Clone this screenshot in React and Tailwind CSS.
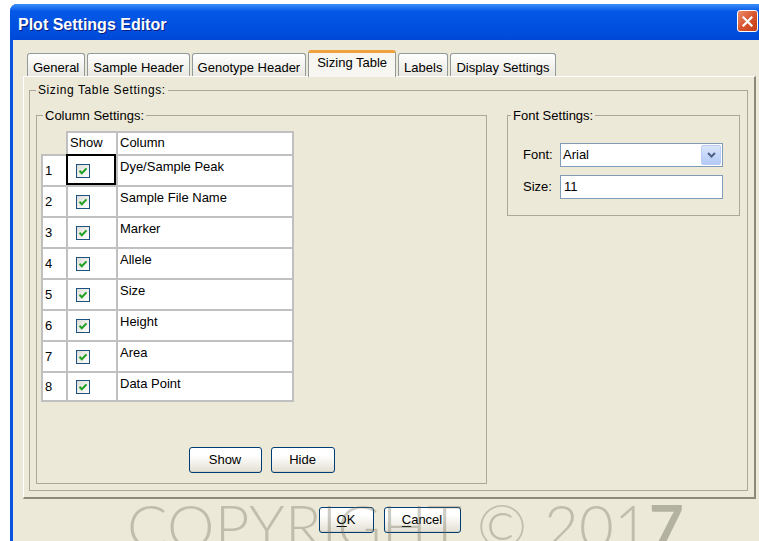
import { useState } from "react";

const tabs = ["General", "Sample Header", "Genotype Header", "Sizing Table", "Labels", "Display Settings"];

const columns = [
  "Dye/Sample Peak",
  "Sample File Name",
  "Marker",
  "Allele",
  "Size",
  "Height",
  "Area",
  "Data Point",
];

const XpCheck = ({ checked }) => (
  <span className="flex items-center justify-center w-[14px] h-[14px] border border-[#1c5180] bg-linear-to-br from-[#dcdcd7] to-white">
    {checked && (
      <svg width="10" height="10" viewBox="0 0 10 10">
        <path d="M1.5 4.8 L3.8 7.2 L8.5 2.4" fill="none" stroke="#21a121" strokeWidth="2" />
      </svg>
    )}
  </span>
);

const XpButton = ({ children, className = "" }) => (
  <button
    className={
      "h-[26px] rounded-[3px] border border-[#003c74] bg-linear-to-b from-white from-30% to-[#e3e0d3] text-[13px] text-black shadow-[inset_0_-1px_0_#d6d0c5] " +
      className
    }
  >
    {children}
  </button>
);

// legend offset is counted from the fieldset's padding edge, so group boxes keep
// their horizontal padding on the inner content instead
const GroupBox = ({ label, legendClass = "ml-[6px]", className = "", children }) => (
  <fieldset className={"border border-[#aca899] min-w-0 " + className}>
    <legend className={"px-[2px] text-[13px] leading-[15px] text-black " + legendClass}>{label}</legend>
    {children}
  </fieldset>
);

export default function App() {
  const [active, setActive] = useState("Sizing Table");
  const [shown, setShown] = useState(columns.map(() => true));

  const cell = "border-l-2 border-t-2 border-[#c0c0c0] bg-white";

  return (
    <div className="relative w-[759px] h-[541px] overflow-hidden bg-white font-['Liberation_Sans',Arial,sans-serif]">
      <div className="ml-[10px] mt-[4px] w-[754px] h-[560px] rounded-t-[7px] bg-[#0a53e0] flex flex-col">
        {/* title bar */}
        <div className="h-[36px] flex justify-between pl-[8px] pr-[6px] rounded-t-[7px] bg-linear-to-b from-[#3c8ff7] from-0% via-[#0458e8] via-20% to-[#0049d8] to-100%">
          <span className="pt-[12px] text-white font-bold text-[16px] leading-[18px] [text-shadow:1px_1px_0_#0a1e80]">
            Plot Settings Editor
          </span>
          <button className="mt-[6px] w-[21px] h-[22px] rounded-[3px] border border-white bg-linear-to-br from-[#ec8d6c] via-[#d8552f] to-[#c13d16] flex items-center justify-center">
            <svg width="11" height="11" viewBox="0 0 11 11">
              <path d="M1.5 1.5 L9.5 9.5 M9.5 1.5 L1.5 9.5" stroke="white" strokeWidth="2.2" strokeLinecap="square" />
            </svg>
          </button>
        </div>

        {/* client area */}
        <div className="flex-1 mx-[3px] bg-[#ece9d8] flex flex-col pt-[10px] pl-[10px] pr-[5px]">
          <div className="flex items-end h-[26px] pl-[4px] gap-[2px]">
            {tabs.map((t) =>
              t === active ? (
                <div
                  key={t}
                  className="relative z-10 -mb-px h-[27px] px-[8px] pt-[2px] border-x border-t-[3px] border-x-[#919b9c] border-t-[#f0a33c] rounded-t-[3px] bg-[#f7f6f1] text-[13px] leading-[15px] text-black"
                >
                  {t}
                </div>
              ) : (
                <div
                  key={t}
                  onClick={() => setActive(t)}
                  className="h-[23px] px-[5px] pt-[6px] border-x border-t border-[#919b9c] rounded-t-[3px] bg-linear-to-b from-white to-[#e9e8e1] text-[13px] leading-[15px] text-black cursor-default"
                >
                  {t}
                </div>
              )
            )}
          </div>

          {/* tab pane */}
          <div className="h-[423px] flex flex-col border-t border-l border-white border-r-2 border-b-2 border-r-[#8d8a7d] border-b-[#8d8a7d] pt-[6px] pl-[5px] pr-[6px] pb-[6px]">
            <fieldset className="flex-1 border border-[#aca899] min-w-0 pt-[11px] pb-[6px]">
              <legend className="ml-[6px] px-[2px] text-[12px] leading-[14px] tracking-[0.6px] text-black">
                Sizing Table Settings:
              </legend>
              <div className="flex gap-[20px] items-start px-[6px]">
                <GroupBox label="Column Settings:" className="w-[451px] h-[376px] flex flex-col pt-[8px] pb-[10px]">
                  <div className="ml-[4px] grid grid-cols-[25px_50px_178px] grid-rows-[23px_repeat(8,31px)] text-[13px] text-black">
                    <div />
                    <div className={cell + " pl-[2px] leading-[19px]"}>Show</div>
                    <div className={cell + " border-r-2 pl-[2px] leading-[19px]"}>Column</div>
                    {columns.map((c, i) => {
                      const last = i === columns.length - 1 ? " border-b-2" : "";
                      return [
                        <div key={c + "n"} className={cell + last + " flex items-center pl-[2px]"}>
                          {i + 1}
                        </div>,
                        <div
                          key={c + "s"}
                          onClick={() => setShown(shown.map((v, j) => (j === i ? !v : v)))}
                          className={
                            cell +
                            last +
                            " flex items-center pl-[8px]" +
                            (i === 0 ? " border-l-black border-t-black shadow-[inset_-2px_-2px_0_#000]" : "")
                          }
                        >
                          <XpCheck checked={shown[i]} />
                        </div>,
                        <div key={c + "c"} className={cell + last + " border-r-2 pl-[2px] pt-[3px] leading-[15px]"}>
                          {c}
                        </div>,
                      ];
                    })}
                  </div>
                  <div className="mt-auto flex justify-center gap-[9px]">
                    <XpButton className="w-[73px]">Show</XpButton>
                    <XpButton className="w-[64px]">Hide</XpButton>
                  </div>
                </GroupBox>

                <GroupBox label="Font Settings:" legendClass="ml-[3px]" className="w-[233px] pt-[20px] pb-[16px]">
                  <div className="grid grid-cols-[30px_1fr] gap-x-[7px] gap-y-[8px] items-center pl-[15px] pr-[16px] text-[13px] text-black">
                    <span>Font:</span>
                    <div className="h-[24px] border border-[#7f9db9] bg-white flex items-center justify-between pl-[2px] pr-[1px]">
                      <span>Arial</span>
                      <span className="w-[20px] h-[20px] rounded-[2px] border border-[#b9cdf5] bg-linear-to-b from-[#dbe6fd] to-[#b4c9f5] flex items-center justify-center">
                        <svg width="9" height="6" viewBox="0 0 9 6">
                          <path d="M1 1 L4.5 4.5 L8 1" fill="none" stroke="#4d6185" strokeWidth="2" />
                        </svg>
                      </span>
                    </div>
                    <span>Size:</span>
                    <div className="h-[24px] border border-[#7f9db9] bg-white flex items-center pl-[3px]">11</div>
                  </div>
                </GroupBox>
              </div>
            </fieldset>
          </div>

          <div className="flex justify-center gap-[10px] pt-[8px]">
            <XpButton className="w-[55px]">
              <span className="underline underline-offset-2">O</span>K
            </XpButton>
            <XpButton className="w-[77px]">
              <span className="underline underline-offset-2">C</span>ancel
            </XpButton>
          </div>
        </div>
      </div>

      {/* watermark */}
      <div className="pointer-events-none absolute left-[127px] top-[495px] z-20 whitespace-nowrap text-[60px] leading-none tracking-[0.2px] text-[#6f6c5a]/35 font-['Lato',sans-serif] font-light">
        COPYRIGHT © 201<span className="font-bold text-[#6f6c5a]/45">7</span>
      </div>
    </div>
  );
}
